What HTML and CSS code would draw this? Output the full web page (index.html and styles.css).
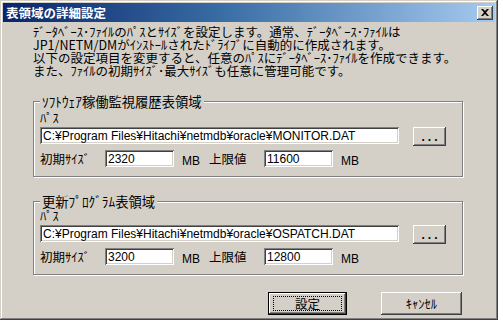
FILE: index.html
```html
<!DOCTYPE html>
<html lang="ja">
<head>
<meta charset="utf-8">
<title>表領域の詳細設定</title>
<link rel="stylesheet" href="styles.css">
</head>
<body>
<div class="window">
  <div class="titlebar">
    <span class="title">表領域の詳細設定</span>
    <span class="close"><svg width="8" height="7" viewBox="0 0 8 7"><path d="M0 0h2l2 2 2-2h2L5 3.5 8 7H6L4 5 2 7H0l3-3.5z" fill="#000"/></svg></span>
  </div>
  <div class="body">
    <p class="desc">ﾃﾞｰﾀﾍﾞｰｽ･ﾌｧｲﾙのﾊﾟｽとｻｲｽﾞを設定します。通常、ﾃﾞｰﾀﾍﾞｰｽ･ﾌｧｲﾙは<br>JP1/NETM/DMがｲﾝｽﾄｰﾙされたﾄﾞﾗｲﾌﾞに自動的に作成されます。<br>以下の設定項目を変更すると、任意のﾊﾟｽにﾃﾞｰﾀﾍﾞｰｽ･ﾌｧｲﾙを作成できます。<br>また、ﾌｧｲﾙの初期ｻｲｽﾞ･最大ｻｲｽﾞも任意に管理可能です。</p>

    <div class="group g1">
      <span class="legend">ｿﾌﾄｳｪｱ稼働監視履歴表領域</span>
      <div class="label">ﾊﾟｽ</div>
      <div class="row path-row">
        <div class="field path">C:¥Program Files¥Hitachi¥netmdb¥oracle¥MONITOR.DAT</div>
        <div class="btn browse"><span class="dots">...</span></div>
      </div>
      <div class="row size-row">
        <span class="lbl">初期ｻｲｽﾞ</span>
        <div class="field num">2320</div>
        <span class="mb">MB</span>
        <span class="lbl max">上限値</span>
        <div class="field num">11600</div>
        <span class="mb">MB</span>
      </div>
    </div>

    <div class="group g2">
      <span class="legend">更新ﾌﾟﾛｸﾞﾗﾑ表領域</span>
      <div class="label">ﾊﾟｽ</div>
      <div class="row path-row">
        <div class="field path">C:¥Program Files¥Hitachi¥netmdb¥oracle¥OSPATCH.DAT</div>
        <div class="btn browse"><span class="dots">...</span></div>
      </div>
      <div class="row size-row">
        <span class="lbl">初期ｻｲｽﾞ</span>
        <div class="field num">3200</div>
        <span class="mb">MB</span>
        <span class="lbl max">上限値</span>
        <div class="field num">12800</div>
        <span class="mb">MB</span>
      </div>
    </div>

    <div class="buttons">
      <div class="btn push default"><span class="focus">設定</span></div>
      <div class="btn push">ｷｬﾝｾﾙ</div>
    </div>
  </div>
</div>
</body>
</html>
```

FILE: styles.css
```css
html, body {
  margin: 0;
  padding: 0;
  background: #ffffff;
}

body {
  font-family: "Noto Sans CJK JP", "Liberation Sans", sans-serif;
  font-size: 12.5px;
  color: #000;
}

.window {
  width: 498px;
  height: 320px;
  box-sizing: border-box;
  padding: 3px;
  background: #d4d0c8;
  box-shadow: inset -1px -1px #404040, inset 1px 1px #d4d0c8,
              inset -2px -2px #808080, inset 2px 2px #ffffff;
}

.titlebar {
  height: 19px;
  display: flex;
  align-items: center;
  justify-content: space-between;
  padding: 0 2px 0 3px;
  background: linear-gradient(to right, #0a246a 0%, #3a6ea5 45%, #a6caf0 100%);
}

.title {
  color: #fff;
  font-weight: bold;
  font-size: 12.5px;
  line-height: 19px;
}

.close {
  width: 16px;
  height: 14px;
  box-sizing: border-box;
  display: flex;
  align-items: center;
  justify-content: center;
  background: #d4d0c8;
  box-shadow: inset -1px -1px #404040, inset 1px 1px #ffffff,
              inset -2px -2px #808080, inset 2px 2px #d4d0c8;
}

.body {
  padding: 0 0 0 30px;
}

.desc {
  margin: 3px 0 0 0;
  line-height: 13px;
  white-space: nowrap;
}

.group {
  position: relative;
  width: 430px;
  box-sizing: border-box;
  border: 1px solid #808080;
  box-shadow: 1px 1px 0 #ffffff, inset 1px 1px 0 #ffffff;
  padding: 9px 6px 8px 6px;
}

.g1 {
  margin-top: 24px;
}

.g2 {
  margin-top: 24px;
  padding-top: 7px;
}

.legend {
  position: absolute;
  top: -8px;
  left: 6px;
  padding: 0 2px;
  font-size: 13.3px;
  line-height: 15px;
  background: #d4d0c8;
  white-space: nowrap;
}

.label {
  line-height: 13px;
  height: 13px;
}

.row {
  display: flex;
  align-items: flex-start;
}

.path-row {
  margin-top: 3px;
  gap: 14px;
}

.size-row {
  margin-top: 4px;
}

.field {
  height: 17px;
  box-sizing: border-box;
  background: #fff;
  padding: 2px 0 0 3px;
  font-family: "Liberation Sans", "Noto Sans CJK JP", sans-serif;
  font-size: 12px;
  line-height: 14px;
  white-space: nowrap;
  box-shadow: inset 1px 1px #808080, inset -1px -1px #ffffff,
              inset 2px 2px #404040, inset -2px -2px #d4d0c8;
}

.path {
  width: 359px;
}

.num {
  width: 69px;
}

.lbl {
  line-height: 13px;
  margin-top: 2px;
  width: 65px;
}

.lbl.max {
  width: 55px;
  padding-left: 3px;
  margin-top: 2px;
}

.mb {
  font-family: "Liberation Sans", sans-serif;
  font-size: 12px;
  line-height: 13px;
  margin-top: 5px;
  margin-left: 8px;
  width: 24px;
}

.btn {
  box-sizing: border-box;
  background: #d4d0c8;
  display: flex;
  align-items: center;
  justify-content: center;
  box-shadow: inset -1px -1px #404040, inset 1px 1px #ffffff,
              inset -2px -2px #808080, inset 2px 2px #d4d0c8;
}

.browse {
  width: 33px;
  height: 19px;
}

.dots {
  font-family: "Liberation Sans", sans-serif;
  font-weight: bold;
  font-size: 12px;
  letter-spacing: 3px;
  margin-left: 3px;
  line-height: 10px;
}

.buttons {
  display: flex;
  gap: 34px;
  margin-top: 17px;
  margin-left: 235px;
}

.push {
  width: 81px;
  height: 23px;
  line-height: 13px;
}

.default {
  width: 79px;
  border: 1px solid #000;
}

.focus {
  width: 67px;
  height: 13px;
  text-align: center;
  outline: 1px dotted #000;
  outline-offset: 0;
}
```
